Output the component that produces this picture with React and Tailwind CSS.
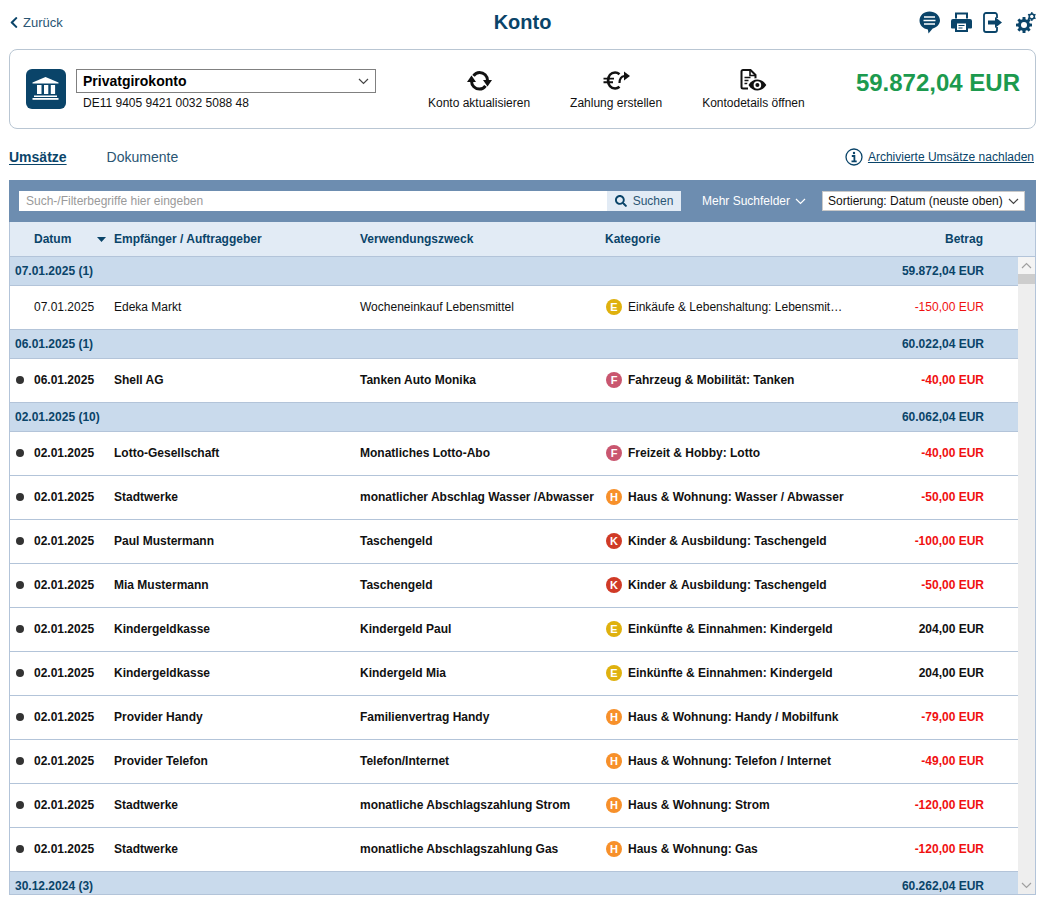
import React from "react";
import { FaChevronLeft, FaSearch } from "react-icons/fa";

const navy = "#0a4469";

const Comment = () => (
  <svg width="21" height="23" viewBox="0 0 21 23">
    <path fill={navy} d="M10.5 0.5C4.9 0.5 0.5 4.4 0.5 9.5c0 4.6 3.6 8.3 8.4 8.9l0.6 4.2 4.2-5c4.2-1.2 7.3-4.6 7.3-8.1C21 4.4 16.1 0.5 10.500 0.500z" />
    <path stroke="#fff" strokeWidth="1.700" d="M5 6h11M4.500 9.500h12M5 13h11" />
  </svg>
);
const Printer = () => (
  <svg width="21" height="20" viewBox="0 0 21 20">
    <path fill={navy} d="M4 0.500h13v6h-2V2.500H6v4H4z" />
    <path fill={navy} d="M2 7h17a2 2 0 0 1 2 2v6.500a1 1 0 0 1-1 1h-3V20H4v-3.500H1a1 1 0 0 1-1-1V9a2 2 0 0 1 2-2z" />
    <rect x="6" y="11.500" width="9" height="6.500" fill="#fff" />
    <path stroke={navy} strokeWidth="1.200" d="M7.500 13.500h6M7.500 16h4" />
  </svg>
);
const Exit = () => (
  <svg width="20" height="21" viewBox="0 0 20 21" fill="none">
    <path stroke={navy} strokeWidth="1.800" d="M14 6V3a2 2 0 0 0-2-2H3a2 2 0 0 0-2 2v15a2 2 0 0 0 2 2h9a2 2 0 0 0 2-2v-3" />
    <path fill={navy} d="M5 8.500h7V5l7 5.500-7 5.500v-3.500H5z" />
  </svg>
);
const Gears = () => (
  <svg width="20" height="21" viewBox="0 0 20 21" fill="none">
    <g transform="translate(8 13)">
      {[0, 45, 90, 135].map((a) => (
        <rect key={a} x="-1.500" y="-8" width="3" height="16" rx="0.500" fill={navy} transform={`rotate(${a})`} />
      ))}
      <circle r="6" fill={navy} />
      <circle r="3" fill="#fff" />
    </g>
    <g transform="translate(15.800 4.500)">
      {[0, 60, 120].map((a) => (
        <rect key={a} x="-0.800" y="-4.300" width="1.600" height="8.600" fill={navy} transform={`rotate(${a})`} />
      ))}
      <circle r="3.300" fill={navy} />
      <circle r="1.700" fill="#fff" />
    </g>
  </svg>
);
const Info = () => (
  <svg width="18" height="18" viewBox="0 0 18 18" fill="none">
    <circle cx="9" cy="9" r="8" stroke={navy} strokeWidth="1.300" />
    <circle cx="9" cy="5" r="1.200" fill={navy} />
    <path stroke={navy} strokeWidth="1.800" d="M6.800 8h2.600v5M6.500 13.300h5.200" />
  </svg>
);
const Refresh = () => (
  <svg width="25" height="20" viewBox="0 0 25 20" fill="none">
    <path stroke="#111" strokeWidth="3" d="M6.500 4.800C8 2.700 10.200 1.500 12.500 1.500c4.500 0 8 3.500 8 8" />
    <path fill="#111" d="M16 9H25L20.500 15.500z" />
    <path stroke="#111" strokeWidth="3" d="M18.500 14.800c-1.500 2.100-3.700 3.300-6 3.300-4.500 0-8-3.500-8-8" />
    <path fill="#111" d="M0 11H9L4.500 4.500z" />
  </svg>
);
const EuroArrow = () => (
  <svg width="27" height="21" viewBox="0 0 27 21" fill="none">
    <path stroke="#111" strokeWidth="2.700" d="M16.500 4.200c-1.200-1-2.700-1.700-4.400-1.700-4.200 0-7 3.400-7 8s2.800 8 7 8c1.700 0 3.200-.7 4.400-1.700" />
    <path stroke="#111" strokeWidth="1.900" d="M0.500 8.600H11M0.500 12.200H10" />
    <path stroke="#111" strokeWidth="2.200" d="M16.500 13c0-4 1.800-6.500 5-7" />
    <path fill="#111" d="M21 1.500l6 4.500-6 4.500z" />
  </svg>
);
const DocEye = () => (
  <svg width="27" height="23" viewBox="0 0 27 23" fill="none">
    <path stroke="#111" strokeWidth="2" d="M8 19.500H3a1.500 1.500 0 0 1-1.500-1.500V2.500A1.500 1.500 0 0 1 3 1h7.500l5 5v3.500" />
    <path stroke="#111" strokeWidth="1.600" d="M10 1v5.500h5.500M4.500 8.500h6M4.500 11.500h4M4.500 14.500h3" />
    <path fill="#fff" d="M6.500 16c2.500-4.200 6-6.500 10.800-6.500S25 11.800 27 16c-2.500 4.200-5.700 6.500-9.700 6.500S9 20.200 6.500 16z" />
    <path fill="#111" d="M8.500 16c2.200-3.600 5.200-5.500 8.800-5.500s6.800 1.900 9 5.500c-2.200 3.600-5.400 5.500-9 5.500s-6.600-1.900-8.800-5.500z" />
    <circle cx="17.400" cy="16" r="3.800" fill="#fff" />
    <circle cx="17.400" cy="16" r="2" fill="#111" />
  </svg>
);
const Bank = () => (
  <svg width="40" height="40" viewBox="0 0 40 40">
    <path fill="#fff" d="M19.500 8l13 5.500v1h-26v-1z" />
    <path fill="#fff" d="M11 16h4.500v9H11zM18 16h4.300v9H18zM24.800 16h4.300v9h-4.300z" />
    <rect x="8" y="26.500" width="23" height="1.500" fill="#fff" />
    <rect x="6.500" y="29" width="26" height="1.800" fill="#fff" />
  </svg>
);
const Chevron = ({ color = "#444", w = 11 }) => (
  <svg width={w} height="7" viewBox="0 0 11 7" fill="none">
    <path d="M1 1l4.500 4.500L10 1" stroke={color} strokeWidth="1.200" />
  </svg>
);

const badgeColors = { E: "bg-[#dfb10e]", F: "bg-[#c9566f]", H: "bg-[#f7902a]", K: "bg-[#d03a26]" };

const Badge = ({ l, cls }) => (
  <span className={`w-4 h-4 rounded-full flex items-center justify-center text-white text-[11px] font-bold shrink-0 mr-[6px] mt-[1px] ${cls}`}>{l}</span>
);

const rows = [
  { group: "07.01.2025 (1)", sum: "59.872,04 EUR" },
  { d: "07.01.2025", e: "Edeka Markt", v: "Wocheneinkauf Lebensmittel", l: "E", lc: badgeColors.E, k: "Einkäufe & Lebenshaltung: Lebensmit…", a: "-150,00 EUR", read: true },
  { group: "06.01.2025 (1)", sum: "60.022,04 EUR" },
  { d: "06.01.2025", e: "Shell AG", v: "Tanken Auto Monika", l: "F", lc: badgeColors.F, k: "Fahrzeug & Mobilität: Tanken", a: "-40,00 EUR" },
  { group: "02.01.2025 (10)", sum: "60.062,04 EUR" },
  { d: "02.01.2025", e: "Lotto-Gesellschaft", v: "Monatliches Lotto-Abo", l: "F", lc: badgeColors.F, k: "Freizeit & Hobby: Lotto", a: "-40,00 EUR" },
  { d: "02.01.2025", e: "Stadtwerke", v: "monatlicher Abschlag Wasser /Abwasser", l: "H", lc: badgeColors.H, k: "Haus & Wohnung: Wasser / Abwasser", a: "-50,00 EUR" },
  { d: "02.01.2025", e: "Paul Mustermann", v: "Taschengeld", l: "K", lc: badgeColors.K, k: "Kinder & Ausbildung: Taschengeld", a: "-100,00 EUR" },
  { d: "02.01.2025", e: "Mia Mustermann", v: "Taschengeld", l: "K", lc: badgeColors.K, k: "Kinder & Ausbildung: Taschengeld", a: "-50,00 EUR" },
  { d: "02.01.2025", e: "Kindergeldkasse", v: "Kindergeld Paul", l: "E", lc: badgeColors.E, k: "Einkünfte & Einnahmen: Kindergeld", a: "204,00 EUR", pos: true },
  { d: "02.01.2025", e: "Kindergeldkasse", v: "Kindergeld Mia", l: "E", lc: badgeColors.E, k: "Einkünfte & Einnahmen: Kindergeld", a: "204,00 EUR", pos: true },
  { d: "02.01.2025", e: "Provider Handy", v: "Familienvertrag Handy", l: "H", lc: badgeColors.H, k: "Haus & Wohnung: Handy / Mobilfunk", a: "-79,00 EUR" },
  { d: "02.01.2025", e: "Provider Telefon", v: "Telefon/Internet", l: "H", lc: badgeColors.H, k: "Haus & Wohnung: Telefon / Internet", a: "-49,00 EUR" },
  { d: "02.01.2025", e: "Stadtwerke", v: "monatliche Abschlagszahlung Strom", l: "H", lc: badgeColors.H, k: "Haus & Wohnung: Strom", a: "-120,00 EUR" },
  { d: "02.01.2025", e: "Stadtwerke", v: "monatliche Abschlagszahlung Gas", l: "H", lc: badgeColors.H, k: "Haus & Wohnung: Gas", a: "-120,00 EUR" },
  { group: "30.12.2024 (3)", sum: "60.262,04 EUR" },
];

const Action = ({ icon, label }) => (
  <div className="flex flex-col items-center">
    <div className="h-[23px] flex items-center justify-center mb-[4px]">{icon}</div>
    <div className="text-[12px] leading-[14px] text-[#111]">{label}</div>
  </div>
);

export default function App() {
  return (
    <div className="w-[1042px] h-[901px] overflow-hidden bg-white pl-[9px] pr-[6px] pb-[6px] flex flex-col text-[12px] text-[#111] font-['Liberation_Sans',Arial,sans-serif]">
      <div className="h-[49px] shrink-0 flex items-center pb-[5px]">
        <div className="flex-1 flex items-center gap-[4px] text-[13px] text-[#2a5573] pt-[1px]">
          <FaChevronLeft className="text-[#0a4469] w-[10px] h-[13px]" />
          <span>Zurück</span>
        </div>
        <div className="text-[20px] font-bold text-[#0a4469] leading-[24px]">Konto</div>
        <div className="flex-1 flex items-center justify-end gap-[11px]">
          <Comment />
          <Printer />
          <Exit />
          <span className="ml-[2px] flex"><Gears /></span>
        </div>
      </div>

      <div className="h-[80px] shrink-0 rounded-[8px] border border-[#b9c6d3] flex items-start pt-[19px] pl-[16px] pr-[15px]">
        <div className="w-[40px] h-[40px] rounded-[6px] bg-[#0a4469] flex items-center justify-center mr-[10px] shrink-0">
          <Bank />
        </div>
        <div className="w-[300px] shrink-0">
          <div className="h-[24px] border border-[#808080] flex items-center justify-between pl-[6px] pr-[6px] pt-[1px] text-[14px] font-bold text-black">
            <span>Privatgirokonto</span>
            <Chevron />
          </div>
          <div className="pl-[7px] mt-[3px] leading-[14px] text-[12px]">DE11 9405 9421 0032 5088 48</div>
        </div>
        <div className="flex items-start ml-[52px] gap-[40px] shrink-0">
          <Action icon={<Refresh />} label="Konto aktualisieren" />
          <Action icon={<EuroArrow />} label="Zahlung erstellen" />
          <Action icon={<DocEye />} label="Kontodetails öffnen" />
        </div>
        <div className="flex-1 text-right text-[24px] font-bold leading-[28px] text-[#1c9a4e]">59.872,04 EUR</div>
      </div>

      <div className="h-[51px] shrink-0 flex items-center justify-between pr-[2px] pt-[5px]">
        <div className="flex items-center text-[14px] text-[#0a4469]">
          <span className="font-bold underline underline-offset-2">Umsätze</span>
          <span className="ml-[40px] text-[#2a5573]">Dokumente</span>
        </div>
        <div className="flex items-center gap-[5px] text-[12px] text-[#0a4469]">
          <Info />
          <span className="underline">Archivierte Umsätze nachladen</span>
        </div>
      </div>

      <div className="h-[42px] shrink-0 bg-[#6d8db0] flex items-center pl-[10px] pr-[11px]">
        <div className="w-[588px] h-[20px] bg-white flex items-center pl-[7px] text-[#9a9a9a]">Such-/Filterbegriffe hier eingeben</div>
        <div className="w-[74px] h-[20px] bg-[#e2ebf5] flex items-center justify-center gap-[6px] text-[#2a5573]">
          <FaSearch className="w-[12px] h-[12px] text-[#0a4469]" />
          <span>Suchen</span>
        </div>
        <div className="ml-[21px] flex items-center gap-[5px] text-white">
          <span>Mehr Suchfelder</span>
          <Chevron color="#fff" />
        </div>
        <div className="ml-auto w-[203px] h-[20px] bg-white border border-[#c9c9c9] flex items-center justify-between pl-[5px] pr-[5px] text-[#111]">
          <span>Sortierung: Datum (neuste oben)</span>
          <Chevron />
        </div>
      </div>

      <div className="flex-1 min-h-0 flex flex-col border-x border-b border-[#b3c4d9]">
        <div className="h-[35px] shrink-0 bg-[#e2ebf5] border-b border-[#b3c4d9] flex items-center font-bold text-[#0a4469]">
          <div className="w-[104px] pl-[24px] flex items-center justify-between pr-[8px]">
            <span>Datum</span>
            <svg width="9" height="5" viewBox="0 0 9 5"><path d="M0 0h9L4.500 5z" fill="#0a4469" /></svg>
          </div>
          <div className="w-[246px]">Empfänger / Auftraggeber</div>
          <div className="w-[245px]">Verwendungszweck</div>
          <div className="w-[195px]">Kategorie</div>
          <div className="w-[183px] text-right">Betrag</div>
        </div>
        <div className="flex-1 min-h-0 flex">
          <div className="flex-1 min-w-0 overflow-hidden">
            {rows.map((r, i) =>
              r.group ? (
                <div key={i} className="h-[29px] bg-[#c9daec] border-b border-[#b3c4d9] flex items-center justify-between pl-[5px] pr-[34px] font-bold text-[#0a4469]">
                  <span>{r.group}</span>
                  <span>{r.sum}</span>
                </div>
              ) : (
                <div key={i} className={`h-[44px] border-b border-[#b3c4d9] flex items-center pb-[2px] ${r.read ? "" : "font-bold"}`}>
                  <div className="w-[104px] shrink-0 flex items-center pl-[6px]">
                    <span className={`w-[8px] h-[8px] rounded-full mr-[10px] ${r.read ? "" : "bg-[#333]"}`} />
                    <span>{r.d}</span>
                  </div>
                  <div className="w-[246px] shrink-0">{r.e}</div>
                  <div className="w-[245px] shrink-0 whitespace-nowrap">{r.v}</div>
                  <div className="w-[245px] shrink-0 flex items-center pl-[1px]">
                    <Badge l={r.l} cls={r.lc} />
                    <span className="whitespace-nowrap">{r.k}</span>
                  </div>
                  <div className={`w-[134px] shrink-0 text-right ${r.pos ? "text-[#111]" : "text-[#f01010]"}`}>{r.a}</div>
                </div>
              )
            )}
          </div>
          <div className="w-[17px] shrink-0 bg-[#eeeeee] flex flex-col items-center">
            <div className="h-[17px] w-full bg-[#f4f4f4] flex items-center justify-center">
              <span className="rotate-180 flex"><Chevron color="#a0a0a0" /></span>
            </div>
            <div className="h-[10px] w-full bg-[#cdcdcd]" />
            <div className="mt-auto h-[17px] flex items-center justify-center"><Chevron color="#a0a0a0" /></div>
          </div>
        </div>
      </div>
    </div>
  );
}
